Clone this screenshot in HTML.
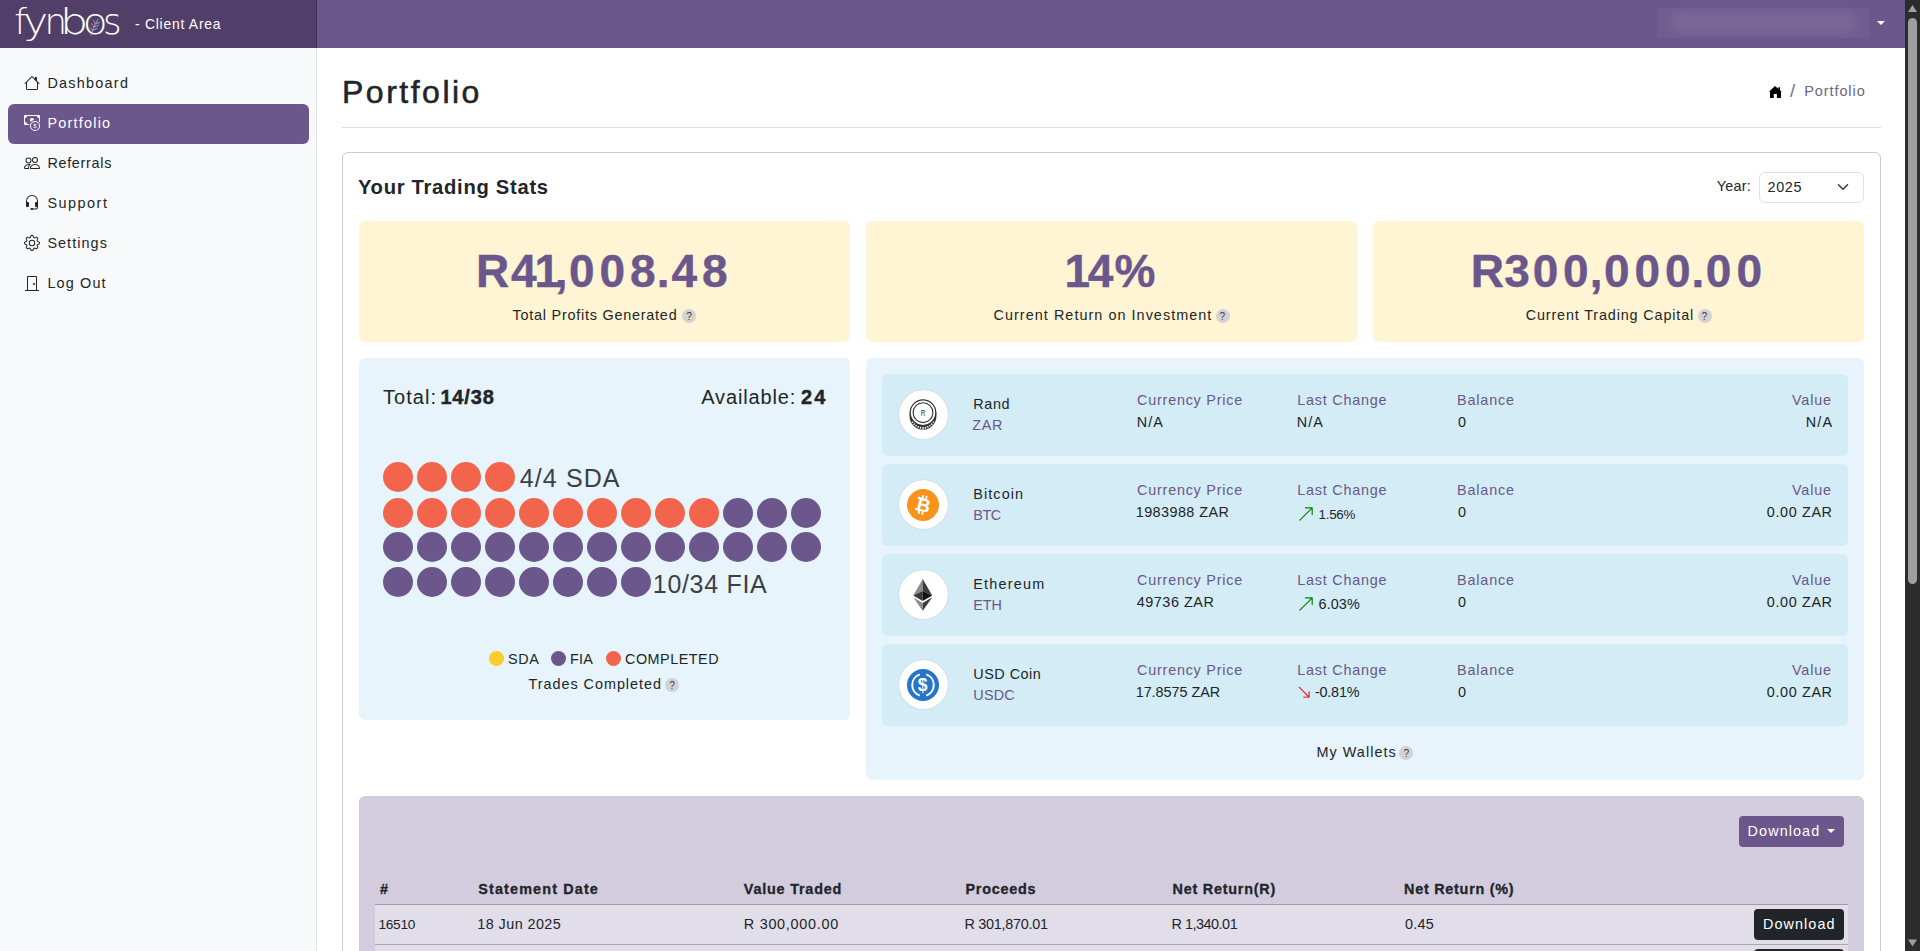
<!DOCTYPE html>
<html lang="en"><head><meta charset="utf-8"><title>Portfolio - Client Area</title>
<style>
html,body{margin:0;padding:0}
body{width:1920px;height:951px;overflow:hidden;position:relative;background:#fff;font-family:"Liberation Sans", sans-serif;color:#212529}
.a{position:absolute;box-sizing:border-box}
.t{position:absolute;white-space:nowrap;line-height:1;margin:0;padding:0}
b{font-weight:700}
.c{display:inline-flex;justify-content:center}
</style></head><body>
<header>
<div class="a" style="left:0px;top:0px;width:317px;height:48px;background:#523f69;"></div>
<div class="a" style="left:317px;top:0px;width:1588px;height:48px;background:#6b578b;"></div>
<div class="a" style="left:316px;top:0px;width:1px;height:48px;background:#47325d;"></div>
<svg class="a" style="left:0;top:0" width="130" height="48" viewBox="0 0 130 48"><text y="34.2" font-family="'DejaVu Sans Light','DejaVu Sans',sans-serif" font-weight="200" font-size="36" fill="#fff"><tspan x="14.3" textLength="12.7" lengthAdjust="spacingAndGlyphs">f</tspan><tspan x="23.3" textLength="24.9" lengthAdjust="spacingAndGlyphs">y</tspan><tspan x="44.4" textLength="22.6" lengthAdjust="spacingAndGlyphs">n</tspan><tspan x="59.9" textLength="28.3" lengthAdjust="spacingAndGlyphs">b</tspan><tspan x="82.7" textLength="24.9" lengthAdjust="spacingAndGlyphs">o</tspan><tspan x="102.9" textLength="18.6" lengthAdjust="spacingAndGlyphs">s</tspan></text><g stroke="#c9bfe0" stroke-width="0.7" fill="none" stroke-linecap="round"><path d="M91 35.500C92.500 30 94.500 25 98 19.500"/><path d="M92.500 30.500l-2.500-3M93.800 27l-2.200-3.400M95.300 24l-1.600-3.400M93.500 30l3.400-1.600M94.900 26.600l3.600-1.400M96.500 23.400l3.200-.8"/></g></svg>
<div class="t" style="left:135.00px;top:18px;font-size:13.9px;color:#fff;letter-spacing:0.753px;">- Client Area</div>
<div class="a" style="left:1657px;top:7.5px;width:212px;height:30.5px;background:rgba(255,255,255,0.035);"></div>
<div class="a" style="left:1669px;top:12px;width:188px;height:21px;background:rgba(255,255,255,0.08);border-radius:10px;filter:blur(5px);"></div>
<svg class="a" style="left:1877px;top:21px" width="8" height="4" viewBox="0 0 8 4"><path d="M0 0h8L4 4z" fill="#fff"/></svg>
</header>
<nav>
<div class="a" style="left:0px;top:48px;width:317px;height:903px;background:#f8f9fa;border-right:1px solid #dee2e6;"></div>
<div class="a" style="left:8px;top:104px;width:301px;height:40px;background:#6b578b;border-radius:6px;"></div>
<svg class="a" style="left:24px;top:75px;" width="16" height="16" viewBox="0 0 16 16" fill="#212529"><path d="M8.707 1.5a1 1 0 0 0-1.414 0L.646 8.146a.5.5 0 0 0 .708.708L2 8.207V13.5A1.5 1.5 0 0 0 3.5 15h9a1.5 1.5 0 0 0 1.5-1.5V8.207l.646.647a.5.5 0 0 0 .708-.708L13 5.793V2.5a.5.5 0 0 0-.5-.5h-1a.5.5 0 0 0-.5.5v1.293zM13 7.207V13.5a.5.5 0 0 1-.5.5h-9a.5.5 0 0 1-.5-.5V7.207l5-5z"/></svg>
<div class="t" style="left:47.40px;top:76px;font-size:14.4px;color:#212529;letter-spacing:1.268px;">Dashboard</div>
<svg class="a" style="left:24px;top:115px;" width="16" height="16" viewBox="0 0 16 16" fill="#fff"><path fill-rule="evenodd" d="M11 15a4 4 0 1 0 0-8 4 4 0 0 0 0 8m5-4a5 5 0 1 1-10 0 5 5 0 0 1 10 0"/><path d="M9.438 11.944c.047.596.518 1.06 1.363 1.116v.44h.375v-.443c.875-.061 1.386-.529 1.386-1.207 0-.618-.39-.936-1.09-1.1l-.296-.07v-1.2c.376.043.614.248.671.532h.658c-.047-.575-.54-1.024-1.329-1.073V8.5h-.375v.45c-.747.073-1.255.522-1.255 1.158 0 .562.378.92 1.007 1.066l.248.061v1.272c-.384-.058-.639-.27-.696-.563h-.668zm1.36-1.354c-.369-.085-.569-.26-.569-.522 0-.294.216-.514.572-.578v1.1zm.432.746c.449.104.655.272.655.569 0 .339-.257.571-.709.614v-1.195z"/><path d="M1 0a1 1 0 0 0-1 1v8a1 1 0 0 0 1 1h4.083q.088-.517.258-1H3a2 2 0 0 0-2-2V3a2 2 0 0 0 2-2h10a2 2 0 0 0 2 2v3.528c.38.34.717.728 1 1.154V1a1 1 0 0 0-1-1z"/><path d="M9.998 5.083 10 5a2 2 0 1 0-3.132 1.65 6 6 0 0 1 3.13-1.567"/></svg>
<div class="t" style="left:47.40px;top:116px;font-size:14.4px;color:#fff;letter-spacing:1.238px;">Portfolio</div>
<svg class="a" style="left:24px;top:155px;" width="16" height="16" viewBox="0 0 16 16" fill="#212529"><path d="M15 14s1 0 1-1-1-4-5-4-5 3-5 4 1 1 1 1zm-7.978-1L7 12.996c.001-.264.167-1.03.76-1.72C8.312 10.629 9.282 10 11 10c1.717 0 2.687.63 3.24 1.276.593.69.758 1.457.76 1.72l-.008.002-.014.002zM11 7a2 2 0 1 0 0-4 2 2 0 0 0 0 4m3-2a3 3 0 1 1-6 0 3 3 0 0 1 6 0M6.936 9.28a6 6 0 0 0-1.23-.247A7 7 0 0 0 5 9c-4 0-5 3-5 4q0 1 1 1h4.216A2.24 2.24 0 0 1 5 13c0-1.01.377-2.042 1.09-2.904.243-.294.526-.569.846-.816M4.92 10A5.5 5.5 0 0 0 4 13H1c0-.26.164-1.03.76-1.724.545-.636 1.492-1.256 3.16-1.275ZM1.5 5.5a3 3 0 1 1 6 0 3 3 0 0 1-6 0m3-2a2 2 0 1 0 0 4 2 2 0 0 0 0-4"/></svg>
<div class="t" style="left:47.40px;top:156px;font-size:14.4px;color:#212529;letter-spacing:0.695px;">Referrals</div>
<svg class="a" style="left:24px;top:195px;" width="16" height="16" viewBox="0 0 16 16" fill="#212529"><path d="M8 1a5 5 0 0 0-5 5v1h1a1 1 0 0 1 1 1v3a1 1 0 0 1-1 1H3a1 1 0 0 1-1-1V6a6 6 0 1 1 12 0v6a2.5 2.5 0 0 1-2.5 2.5H9.366a1 1 0 0 1-.866.5h-1a1 1 0 1 1 0-2h1a1 1 0 0 1 .866.5H11.5A1.5 1.5 0 0 0 13 12h-1a1 1 0 0 1-1-1V8a1 1 0 0 1 1-1h1V6a5 5 0 0 0-5-5"/></svg>
<div class="t" style="left:47.40px;top:196px;font-size:14.4px;color:#212529;letter-spacing:1.521px;">Support</div>
<svg class="a" style="left:24px;top:235px;" width="16" height="16" viewBox="0 0 16 16" fill="#212529"><path d="M8 4.754a3.246 3.246 0 1 0 0 6.492 3.246 3.246 0 0 0 0-6.492M5.754 8a2.246 2.246 0 1 1 4.492 0 2.246 2.246 0 0 1-4.492 0"/><path d="M9.796 1.343c-.527-1.79-3.065-1.79-3.592 0l-.094.319a.873.873 0 0 1-1.255.52l-.292-.16c-1.64-.892-3.433.902-2.54 2.541l.159.292a.873.873 0 0 1-.52 1.255l-.319.094c-1.79.527-1.79 3.065 0 3.592l.319.094a.873.873 0 0 1 .52 1.255l-.16.292c-.892 1.64.901 3.434 2.541 2.54l.292-.159a.873.873 0 0 1 1.255.52l.094.319c.527 1.79 3.065 1.79 3.592 0l.094-.319a.873.873 0 0 1 1.255-.52l.292.16c1.64.893 3.434-.902 2.54-2.541l-.159-.292a.873.873 0 0 1 .52-1.255l.319-.094c1.79-.527 1.79-3.065 0-3.592l-.319-.094a.873.873 0 0 1-.52-1.255l.16-.292c.893-1.64-.902-3.433-2.541-2.54l-.292.159a.873.873 0 0 1-1.255-.52zm-2.633.283c.246-.835 1.428-.835 1.674 0l.094.319a1.873 1.873 0 0 0 2.693 1.115l.291-.16c.764-.415 1.6.42 1.184 1.185l-.159.292a1.873 1.873 0 0 0 1.116 2.692l.318.094c.835.246.835 1.428 0 1.674l-.319.094a1.873 1.873 0 0 0-1.115 2.693l.16.291c.415.764-.42 1.6-1.185 1.184l-.291-.159a1.873 1.873 0 0 0-2.693 1.116l-.094.318c-.246.835-1.428.835-1.674 0l-.094-.319a1.873 1.873 0 0 0-2.692-1.115l-.292.16c-.764.415-1.6-.42-1.184-1.185l.159-.291A1.873 1.873 0 0 0 1.945 8.93l-.319-.094c-.835-.246-.835-1.428 0-1.674l.319-.094A1.873 1.873 0 0 0 3.06 4.377l-.16-.292c-.415-.764.42-1.6 1.185-1.184l.292.159a1.873 1.873 0 0 0 2.692-1.115z"/></svg>
<div class="t" style="left:47.40px;top:236px;font-size:14.4px;color:#212529;letter-spacing:1.062px;">Settings</div>
<svg class="a" style="left:24px;top:275px;" width="16" height="16" viewBox="0 0 16 16" fill="#212529"><path d="M3 2a1 1 0 0 1 1-1h8a1 1 0 0 1 1 1v13h1.5a.5.5 0 0 1 0 1h-13a.5.5 0 0 1 0-1H3zm1 13h8V2H4z"/><path d="M9 9a1 1 0 1 0 2 0 1 1 0 0 0-2 0"/></svg>
<div class="t" style="left:47.40px;top:276px;font-size:14.4px;color:#212529;letter-spacing:1.161px;">Log Out</div>
</nav>
<main>
<div class="t" style="left:342.00px;top:76px;font-size:32px;color:#212529;-webkit-text-stroke:0.55px #212529;letter-spacing:2.502px;">Portfolio</div>
<svg class="a" style="left:1768px;top:85px" width="15" height="14" viewBox="0 0 15 14"><path d="M7 1L.9 6.700h1.100v6.200h3.750V9.100h3.150v3.800h4.100V6.700h.600L12 5.100V2.250h-1.600v1.450z" fill="#000"/></svg>
<div class="t" style="left:1790.00px;top:82px;font-size:18.5px;color:#6c757d;">/</div>
<div class="t" style="left:1804.15px;top:84px;font-size:14.4px;color:#6c6480;letter-spacing:0.969px;">Portfolio</div>
<div class="a" style="left:342px;top:127px;width:1539px;height:1px;background:#dddbe6;"></div>
<section>
<div class="a" style="left:342px;top:152px;width:1539px;height:830px;background:#fff;border-radius:6px;border:1px solid #cbcbce;"></div>
<div class="t" style="left:357.90px;top:177px;font-size:20.2px;color:#212529;font-weight:700;letter-spacing:0.719px;">Your Trading Stats</div>
<div class="t" style="left:1716.74px;top:179px;font-size:14.4px;color:#212529;letter-spacing:0.246px;">Year:</div>
<div class="a" style="left:1759px;top:172px;width:104.5px;height:31px;background:#fff;border-radius:6px;border:1px solid #dee2e6;"></div>
<div class="t" style="left:1767.50px;top:180px;font-size:14.4px;color:#212529;letter-spacing:0.661px;">2025</div>
<svg class="a" style="left:1836.8px;top:180.7px" width="12" height="12" viewBox="0 0 16 16"><path fill="none" stroke="#343a40" stroke-linecap="round" stroke-linejoin="round" stroke-width="2" d="m2 5 6 6 6-6"/></svg>
<div class="a" style="left:359px;top:221px;width:491px;height:120.5px;background:#fff4d3;border-radius:6px;"></div>
<div class="t" style="left:476.44px;top:248px;font-size:46.0px;color:#6b578b;font-weight:700;-webkit-text-stroke:0.4px #6b578b;"><span class="c" style="width:32.36px">R</span><span class="c" style="width:29.77px">4</span><span class="c" style="width:17.34px">1</span><span class="c" style="width:10.55px">,</span><span class="c" style="width:30.62px">0</span><span class="c" style="width:30.62px">0</span><span class="c" style="width:30.12px">8</span><span class="c" style="width:10.89px">.</span><span class="c" style="width:31.36px">4</span><span class="c" style="width:29.67px">8</span></div>
<div class="t" style="left:512.50px;top:308px;font-size:14.4px;color:#212529;letter-spacing:0.771px;">Total Profits Generated</div>
<div class="a" style="left:682.1px;top:309px;width:14px;height:14px;background:#d3d3d3;border-radius:7px;"></div>
<div class="t" style="left:686.28px;top:312px;font-size:10.2px;color:#3d3d3d;">?</div>
<div class="a" style="left:866px;top:221px;width:491px;height:120.5px;background:#fff4d3;border-radius:6px;"></div>
<div class="t" style="left:1068.59px;top:248px;font-size:46.0px;color:#6b578b;font-weight:700;-webkit-text-stroke:0.4px #6b578b;"><span class="c" style="width:17.34px">1</span><span class="c" style="width:29.53px">4</span><span class="c" style="width:39.14px">%</span></div>
<div class="t" style="left:993.55px;top:308px;font-size:14.4px;color:#212529;letter-spacing:1.045px;">Current Return on Investment</div>
<div class="a" style="left:1215.9px;top:309px;width:14px;height:14px;background:#d3d3d3;border-radius:7px;"></div>
<div class="t" style="left:1219.58px;top:312px;font-size:10.2px;color:#3d3d3d;">?</div>
<div class="a" style="left:1373px;top:221px;width:491px;height:120.5px;background:#fff4d3;border-radius:6px;"></div>
<div class="t" style="left:1470.77px;top:248px;font-size:46.0px;color:#6b578b;font-weight:700;-webkit-text-stroke:0.4px #6b578b;"><span class="c" style="width:33.03px">R</span><span class="c" style="width:26.48px">3</span><span class="c" style="width:30.62px">0</span><span class="c" style="width:30.06px">0</span><span class="c" style="width:10.55px">,</span><span class="c" style="width:30.62px">0</span><span class="c" style="width:30.62px">0</span><span class="c" style="width:30.06px">0</span><span class="c" style="width:10.55px">.</span><span class="c" style="width:30.62px">0</span><span class="c" style="width:30.62px">0</span></div>
<div class="t" style="left:1525.65px;top:308px;font-size:14.4px;color:#212529;letter-spacing:0.857px;">Current Trading Capital</div>
<div class="a" style="left:1697.8px;top:309px;width:14px;height:14px;background:#d3d3d3;border-radius:7px;"></div>
<div class="t" style="left:1701.48px;top:312px;font-size:10.2px;color:#3d3d3d;">?</div>
<section>
<div class="a" style="left:359px;top:358px;width:491px;height:361.6px;background:#e7f4fb;border-radius:6px;"></div>
<div class="t" style="left:383.00px;top:387px;font-size:20px;color:#212529;letter-spacing:1.050px;">Total:</div>
<div class="t" style="left:440.42px;top:387px;font-size:20px;color:#212529;font-weight:700;-webkit-text-stroke:0.45px #212529;letter-spacing:0.830px;">14/38</div>
<div class="t" style="left:701.30px;top:387px;font-size:20px;color:#212529;letter-spacing:0.837px;">Available:</div>
<div class="t" style="left:801.02px;top:387px;font-size:20px;color:#212529;font-weight:700;-webkit-text-stroke:0.45px #212529;letter-spacing:2.125px;">24</div>
<div class="a" style="left:383px;top:461.75px;width:30px;height:30px;background:#f2644b;border-radius:15.0px;"></div>
<div class="a" style="left:417px;top:461.75px;width:30px;height:30px;background:#f2644b;border-radius:15.0px;"></div>
<div class="a" style="left:451px;top:461.75px;width:30px;height:30px;background:#f2644b;border-radius:15.0px;"></div>
<div class="a" style="left:485px;top:461.75px;width:30px;height:30px;background:#f2644b;border-radius:15.0px;"></div>
<div class="t" style="left:519.80px;top:466px;font-size:25px;color:#3c4045;letter-spacing:1.096px;">4/4 SDA</div>
<div class="a" style="left:383px;top:497.5px;width:30px;height:30px;background:#f2644b;border-radius:15.0px;"></div>
<div class="a" style="left:417px;top:497.5px;width:30px;height:30px;background:#f2644b;border-radius:15.0px;"></div>
<div class="a" style="left:451px;top:497.5px;width:30px;height:30px;background:#f2644b;border-radius:15.0px;"></div>
<div class="a" style="left:485px;top:497.5px;width:30px;height:30px;background:#f2644b;border-radius:15.0px;"></div>
<div class="a" style="left:519px;top:497.5px;width:30px;height:30px;background:#f2644b;border-radius:15.0px;"></div>
<div class="a" style="left:553px;top:497.5px;width:30px;height:30px;background:#f2644b;border-radius:15.0px;"></div>
<div class="a" style="left:587px;top:497.5px;width:30px;height:30px;background:#f2644b;border-radius:15.0px;"></div>
<div class="a" style="left:621px;top:497.5px;width:30px;height:30px;background:#f2644b;border-radius:15.0px;"></div>
<div class="a" style="left:655px;top:497.5px;width:30px;height:30px;background:#f2644b;border-radius:15.0px;"></div>
<div class="a" style="left:689px;top:497.5px;width:30px;height:30px;background:#f2644b;border-radius:15.0px;"></div>
<div class="a" style="left:723px;top:497.5px;width:30px;height:30px;background:#6b578b;border-radius:15.0px;"></div>
<div class="a" style="left:757px;top:497.5px;width:30px;height:30px;background:#6b578b;border-radius:15.0px;"></div>
<div class="a" style="left:791px;top:497.5px;width:30px;height:30px;background:#6b578b;border-radius:15.0px;"></div>
<div class="a" style="left:383px;top:532px;width:30px;height:30px;background:#6b578b;border-radius:15.0px;"></div>
<div class="a" style="left:417px;top:532px;width:30px;height:30px;background:#6b578b;border-radius:15.0px;"></div>
<div class="a" style="left:451px;top:532px;width:30px;height:30px;background:#6b578b;border-radius:15.0px;"></div>
<div class="a" style="left:485px;top:532px;width:30px;height:30px;background:#6b578b;border-radius:15.0px;"></div>
<div class="a" style="left:519px;top:532px;width:30px;height:30px;background:#6b578b;border-radius:15.0px;"></div>
<div class="a" style="left:553px;top:532px;width:30px;height:30px;background:#6b578b;border-radius:15.0px;"></div>
<div class="a" style="left:587px;top:532px;width:30px;height:30px;background:#6b578b;border-radius:15.0px;"></div>
<div class="a" style="left:621px;top:532px;width:30px;height:30px;background:#6b578b;border-radius:15.0px;"></div>
<div class="a" style="left:655px;top:532px;width:30px;height:30px;background:#6b578b;border-radius:15.0px;"></div>
<div class="a" style="left:689px;top:532px;width:30px;height:30px;background:#6b578b;border-radius:15.0px;"></div>
<div class="a" style="left:723px;top:532px;width:30px;height:30px;background:#6b578b;border-radius:15.0px;"></div>
<div class="a" style="left:757px;top:532px;width:30px;height:30px;background:#6b578b;border-radius:15.0px;"></div>
<div class="a" style="left:791px;top:532px;width:30px;height:30px;background:#6b578b;border-radius:15.0px;"></div>
<div class="a" style="left:383px;top:566.6px;width:30px;height:30px;background:#6b578b;border-radius:15.0px;"></div>
<div class="a" style="left:417px;top:566.6px;width:30px;height:30px;background:#6b578b;border-radius:15.0px;"></div>
<div class="a" style="left:451px;top:566.6px;width:30px;height:30px;background:#6b578b;border-radius:15.0px;"></div>
<div class="a" style="left:485px;top:566.6px;width:30px;height:30px;background:#6b578b;border-radius:15.0px;"></div>
<div class="a" style="left:519px;top:566.6px;width:30px;height:30px;background:#6b578b;border-radius:15.0px;"></div>
<div class="a" style="left:553px;top:566.6px;width:30px;height:30px;background:#6b578b;border-radius:15.0px;"></div>
<div class="a" style="left:587px;top:566.6px;width:30px;height:30px;background:#6b578b;border-radius:15.0px;"></div>
<div class="a" style="left:621px;top:566.6px;width:30px;height:30px;background:#6b578b;border-radius:15.0px;"></div>
<div class="t" style="left:652.80px;top:572px;font-size:25px;color:#3c4045;letter-spacing:0.691px;">10/34 FIA</div>
<div class="a" style="left:488.7px;top:651px;width:15.2px;height:15.2px;background:#fbcd2b;border-radius:7.6px;"></div>
<div class="t" style="left:508.00px;top:652px;font-size:14.4px;color:#212529;letter-spacing:0.664px;">SDA</div>
<div class="a" style="left:550.7px;top:651px;width:15.2px;height:15.2px;background:#6b578b;border-radius:7.6px;"></div>
<div class="t" style="left:570.00px;top:652px;font-size:14.4px;color:#212529;letter-spacing:0.195px;">FIA</div>
<div class="a" style="left:606.3px;top:651px;width:15.2px;height:15.2px;background:#f2644b;border-radius:7.6px;"></div>
<div class="t" style="left:625.00px;top:652px;font-size:14.4px;color:#212529;letter-spacing:0.504px;">COMPLETED</div>
<div class="t" style="left:528.50px;top:677px;font-size:14.4px;color:#212529;letter-spacing:0.976px;">Trades Completed</div>
<div class="a" style="left:665px;top:678px;width:14px;height:14px;background:#d3d3d3;border-radius:7px;"></div>
<div class="t" style="left:669.18px;top:681px;font-size:10.2px;color:#3d3d3d;">?</div>
</section>
<section>
<div class="a" style="left:866px;top:358px;width:998px;height:421.8px;background:#e7f4fb;border-radius:6px;"></div>
<div class="a" style="left:882px;top:374px;width:966px;height:82px;background:#d3ecf6;border-radius:6px;"></div>
<div class="a" style="left:898.8px;top:390.2px;width:49px;height:49px;background:#fff;border-radius:24.5px;box-shadow:0 0 1px rgba(120,60,90,.4);"></div>
<svg class="a" style="left:907px;top:398.4px" width="32" height="33" viewBox="0 0 32 33"><path d="M2.600 14.700v3.500a13.400 13.400 0 0 0 26.800 0v-3.500z" fill="#333"/><path d="M25.44 23.65L27.00 24.55M24.10 25.49L25.44 26.70M22.41 27.02L23.46 28.47M20.43 28.16L21.17 29.80M18.27 28.86L18.64 30.62M16.00 29.10L16.00 30.90M13.73 28.86L13.36 30.62M11.57 28.16L10.83 29.80M9.59 27.02L8.54 28.47M7.90 25.49L6.56 26.70M6.56 23.65L5.00 24.55" stroke="#fff" stroke-width="1.300" fill="none"/><circle cx="16" cy="14.700" r="12.800" fill="#fff" stroke="#333" stroke-width="1.200"/><circle cx="16" cy="14.700" r="9.900" fill="none" stroke="#333" stroke-width="1.100"/><text x="13.750" y="18.200" font-family="'Liberation Sans',sans-serif" font-size="9.800" fill="#2b2b2b" textLength="4.700" lengthAdjust="spacingAndGlyphs">R</text></svg>
<div class="t" style="left:973.30px;top:397px;font-size:14.4px;color:#212529;letter-spacing:0.635px;">Rand</div>
<div class="t" style="left:972.30px;top:418px;font-size:14.4px;color:#6b578b;letter-spacing:0.648px;">ZAR</div>
<div class="t" style="left:1137.10px;top:393px;font-size:14.4px;color:#6b578b;letter-spacing:0.764px;">Currency Price</div>
<div class="t" style="left:1136.70px;top:415px;font-size:14.4px;color:#212529;letter-spacing:1.133px;">N/A</div>
<div class="t" style="left:1297.20px;top:393px;font-size:14.4px;color:#6b578b;letter-spacing:0.770px;">Last Change</div>
<div class="t" style="left:1296.70px;top:415px;font-size:14.4px;color:#212529;letter-spacing:1.133px;">N/A</div>
<div class="t" style="left:1457.00px;top:393px;font-size:14.4px;color:#6b578b;letter-spacing:0.849px;">Balance</div>
<div class="t" style="left:1458.00px;top:415px;font-size:14.4px;color:#212529;">0</div>
<div class="t" style="left:1792.02px;top:393px;font-size:14.4px;color:#6b578b;letter-spacing:0.809px;">Value</div>
<div class="t" style="left:1805.73px;top:415px;font-size:14.4px;color:#212529;letter-spacing:1.133px;">N/A</div>
<div class="a" style="left:882px;top:464px;width:966px;height:82px;background:#d3ecf6;border-radius:6px;"></div>
<div class="a" style="left:898.8px;top:480.2px;width:49px;height:49px;background:#fff;border-radius:24.5px;box-shadow:0 0 1px rgba(120,60,90,.4);"></div>
<svg class="a" style="left:907px;top:489px" width="32" height="32" viewBox="0 0 32 32"><circle cx="16" cy="16" r="16" fill="#f7931a"/><g transform="rotate(14 16 16)" fill="#fff"><text x="16.700" y="22.600" text-anchor="middle" font-family="'Liberation Sans',sans-serif" font-weight="700" font-size="19" textLength="13.300" lengthAdjust="spacingAndGlyphs">B</text><rect x="12.900" y="6.400" width="1.900" height="3.600"/><rect x="16.500" y="6.400" width="1.900" height="3.600"/><rect x="12.900" y="22" width="1.900" height="3.600"/><rect x="16.500" y="22" width="1.900" height="3.600"/><rect x="9.200" y="9" width="3" height="2.300"/><rect x="9.200" y="20.400" width="3" height="2.300"/></g></svg>
<div class="t" style="left:973.30px;top:487px;font-size:14.4px;color:#212529;letter-spacing:1.094px;">Bitcoin</div>
<div class="t" style="left:973.30px;top:508px;font-size:14.4px;color:#6b578b;letter-spacing:-0.430px;">BTC</div>
<div class="t" style="left:1137.10px;top:483px;font-size:14.4px;color:#6b578b;letter-spacing:0.764px;">Currency Price</div>
<div class="t" style="left:1135.70px;top:505px;font-size:14.4px;color:#212529;letter-spacing:0.444px;">1983988 ZAR</div>
<div class="t" style="left:1297.20px;top:483px;font-size:14.4px;color:#6b578b;letter-spacing:0.770px;">Last Change</div>
<svg class="a" style="left:1296.5px;top:505.3px;" width="18" height="18" viewBox="0 0 16 16" fill="#008000"><path fill-rule="evenodd" d="M14 2.5a.5.5 0 0 0-.5-.5h-6a.5.5 0 0 0 0 1h4.793L2.146 13.146a.5.5 0 0 0 .708.708L13 3.707V8.5a.5.5 0 0 0 1 0z"/></svg>
<div class="t" style="left:1318.60px;top:508px;font-size:13.4px;color:#212529;letter-spacing:-0.293px;">1.56%</div>
<div class="t" style="left:1457.00px;top:483px;font-size:14.4px;color:#6b578b;letter-spacing:0.849px;">Balance</div>
<div class="t" style="left:1458.00px;top:505px;font-size:14.4px;color:#212529;">0</div>
<div class="t" style="left:1792.02px;top:483px;font-size:14.4px;color:#6b578b;letter-spacing:0.809px;">Value</div>
<div class="t" style="left:1766.83px;top:505px;font-size:14.4px;color:#212529;letter-spacing:0.625px;">0.00 ZAR</div>
<div class="a" style="left:882px;top:554px;width:966px;height:82px;background:#d3ecf6;border-radius:6px;"></div>
<div class="a" style="left:898.8px;top:570.2px;width:49px;height:49px;background:#fff;border-radius:24.5px;box-shadow:0 0 1px rgba(120,60,90,.4);"></div>
<svg class="a" style="left:907px;top:579px" width="32" height="32" viewBox="0 0 32 32"><path d="M15.700 0L6.200 16.400l9.500-4.300z" fill="#8c8c8c"/><path d="M15.700 0l9.500 16.400-9.500-4.300z" fill="#3c3c3b"/><path d="M15.700 12.100l-9.500 4.300 9.500 5.600z" fill="#393939"/><path d="M15.700 12.100l9.500 4.300-9.500 5.600z" fill="#141414"/><path d="M6.200 18.300l9.500 5.600V32z" fill="#8c8c8c"/><path d="M25.200 18.300l-9.500 5.600V32z" fill="#3c3c3b"/></svg>
<div class="t" style="left:973.30px;top:577px;font-size:14.4px;color:#212529;letter-spacing:1.217px;">Ethereum</div>
<div class="t" style="left:973.30px;top:598px;font-size:14.4px;color:#6b578b;letter-spacing:-0.102px;">ETH</div>
<div class="t" style="left:1137.10px;top:573px;font-size:14.4px;color:#6b578b;letter-spacing:0.764px;">Currency Price</div>
<div class="t" style="left:1136.70px;top:595px;font-size:14.4px;color:#212529;letter-spacing:0.545px;">49736 ZAR</div>
<div class="t" style="left:1297.20px;top:573px;font-size:14.4px;color:#6b578b;letter-spacing:0.770px;">Last Change</div>
<svg class="a" style="left:1296.5px;top:595.3px;" width="18" height="18" viewBox="0 0 16 16" fill="#008000"><path fill-rule="evenodd" d="M14 2.5a.5.5 0 0 0-.5-.5h-6a.5.5 0 0 0 0 1h4.793L2.146 13.146a.5.5 0 0 0 .708.708L13 3.707V8.5a.5.5 0 0 0 1 0z"/></svg>
<div class="t" style="left:1318.60px;top:597px;font-size:14.4px;color:#212529;letter-spacing:0.070px;">6.03%</div>
<div class="t" style="left:1457.00px;top:573px;font-size:14.4px;color:#6b578b;letter-spacing:0.849px;">Balance</div>
<div class="t" style="left:1458.00px;top:595px;font-size:14.4px;color:#212529;">0</div>
<div class="t" style="left:1792.02px;top:573px;font-size:14.4px;color:#6b578b;letter-spacing:0.809px;">Value</div>
<div class="t" style="left:1766.83px;top:595px;font-size:14.4px;color:#212529;letter-spacing:0.625px;">0.00 ZAR</div>
<div class="a" style="left:882px;top:644px;width:966px;height:82px;background:#d3ecf6;border-radius:6px;"></div>
<div class="a" style="left:898.8px;top:660.2px;width:49px;height:49px;background:#fff;border-radius:24.5px;box-shadow:0 0 1px rgba(120,60,90,.4);"></div>
<svg class="a" style="left:907px;top:669px" width="32" height="32" viewBox="0 0 32 32"><circle cx="16" cy="16" r="16" fill="#2775ca"/><g fill="none" stroke="#fff" stroke-width="2"><path d="M12.800 5.400a11.200 11.200 0 0 0 0 21.200"/><path d="M19.200 5.400a11.200 11.200 0 0 1 0 21.200"/></g><text x="15.600" y="22" text-anchor="middle" font-family="'Liberation Sans',sans-serif" font-weight="700" font-size="17.500" fill="#fff">$</text></svg>
<div class="t" style="left:973.30px;top:667px;font-size:14.4px;color:#212529;letter-spacing:0.489px;">USD Coin</div>
<div class="t" style="left:973.30px;top:688px;font-size:14.4px;color:#6b578b;letter-spacing:0.188px;">USDC</div>
<div class="t" style="left:1137.10px;top:663px;font-size:14.4px;color:#6b578b;letter-spacing:0.764px;">Currency Price</div>
<div class="t" style="left:1135.70px;top:685px;font-size:14.4px;color:#212529;letter-spacing:-0.036px;">17.8575 ZAR</div>
<div class="t" style="left:1297.20px;top:663px;font-size:14.4px;color:#6b578b;letter-spacing:0.770px;">Last Change</div>
<svg class="a" style="left:1297px;top:685.3px;stroke:#ff0000;stroke-width:.2px;" width="14.4" height="14.4" viewBox="0 0 16 16" fill="#ff0000"><path fill-rule="evenodd" d="M14 13.5a.5.5 0 0 1-.5.5h-6a.5.5 0 0 1 0-1h4.793L2.146 2.854a.5.5 0 1 1 .708-.708L13 12.293V7.5a.5.5 0 0 1 1 0z"/></svg>
<div class="t" style="left:1315.00px;top:685px;font-size:14.4px;color:#212529;letter-spacing:-0.225px;">-0.81%</div>
<div class="t" style="left:1457.00px;top:663px;font-size:14.4px;color:#6b578b;letter-spacing:0.849px;">Balance</div>
<div class="t" style="left:1458.00px;top:685px;font-size:14.4px;color:#212529;">0</div>
<div class="t" style="left:1792.02px;top:663px;font-size:14.4px;color:#6b578b;letter-spacing:0.809px;">Value</div>
<div class="t" style="left:1766.83px;top:685px;font-size:14.4px;color:#212529;letter-spacing:0.625px;">0.00 ZAR</div>
<div class="t" style="left:1316.40px;top:745px;font-size:14.4px;color:#212529;letter-spacing:1.054px;">My Wallets</div>
<div class="a" style="left:1399.3px;top:746px;width:14px;height:14px;background:#d3d3d3;border-radius:7px;"></div>
<div class="t" style="left:1403.48px;top:749px;font-size:10.2px;color:#3d3d3d;">?</div>
</section>
<section>
<div class="a" style="left:359px;top:796px;width:1505px;height:200px;background:#d2ccde;border-radius:6px;"></div>
<div class="a" style="left:1739px;top:816px;width:105.3px;height:31px;background:#6b578b;border-radius:4px;"></div>
<div class="t" style="left:1747.60px;top:824px;font-size:14.4px;color:#fff;letter-spacing:1.082px;">Download</div>
<svg class="a" style="left:1827.3px;top:829.3px" width="8" height="4" viewBox="0 0 8 4"><path d="M0 0h8L4 4z" fill="#fff"/></svg>
<div class="t" style="left:380.00px;top:882px;font-size:14.4px;color:#212529;font-weight:700;-webkit-text-stroke:0.3px #212529;">#</div>
<div class="t" style="left:478.30px;top:882px;font-size:14.4px;color:#212529;font-weight:700;-webkit-text-stroke:0.3px #212529;letter-spacing:1.137px;">Statement Date</div>
<div class="t" style="left:743.80px;top:882px;font-size:14.4px;color:#212529;font-weight:700;-webkit-text-stroke:0.3px #212529;letter-spacing:0.793px;">Value Traded</div>
<div class="t" style="left:965.50px;top:882px;font-size:14.4px;color:#212529;font-weight:700;-webkit-text-stroke:0.3px #212529;letter-spacing:0.752px;">Proceeds</div>
<div class="t" style="left:1172.50px;top:882px;font-size:14.4px;color:#212529;font-weight:700;-webkit-text-stroke:0.3px #212529;letter-spacing:0.772px;">Net Return(R)</div>
<div class="t" style="left:1404.00px;top:882px;font-size:14.4px;color:#212529;font-weight:700;-webkit-text-stroke:0.3px #212529;letter-spacing:0.746px;">Net Return (%)</div>
<div class="a" style="left:375px;top:904px;width:1473px;height:1px;background:#a09dab;"></div>
<div class="a" style="left:375px;top:905px;width:1473px;height:39.3px;background:#e1dde9;"></div>
<div class="t" style="left:378.50px;top:918px;font-size:13.7px;color:#212529;letter-spacing:-0.309px;">16510</div>
<div class="t" style="left:477.30px;top:917px;font-size:14.4px;color:#212529;letter-spacing:0.428px;">18 Jun 2025</div>
<div class="t" style="left:743.80px;top:917px;font-size:14.4px;color:#212529;letter-spacing:0.730px;">R 300,000.00</div>
<div class="t" style="left:964.50px;top:917px;font-size:14.4px;color:#212529;letter-spacing:-0.260px;">R 301,870.01</div>
<div class="t" style="left:1171.50px;top:917px;font-size:14.4px;color:#212529;letter-spacing:-0.472px;">R 1,340.01</div>
<div class="t" style="left:1405.00px;top:917px;font-size:14.4px;color:#212529;letter-spacing:0.286px;">0.45</div>
<div class="a" style="left:1754px;top:909.2px;width:90.3px;height:30.5px;background:#212529;border-radius:4px;"></div>
<div class="t" style="left:1763.10px;top:917px;font-size:14.4px;color:#fff;letter-spacing:1.053px;">Download</div>
<div class="a" style="left:375px;top:944.3px;width:1473px;height:1px;background:#aaa6b5;"></div>
<div class="a" style="left:375px;top:945.3px;width:1473px;height:10px;background:#e1dde9;"></div>
<div class="a" style="left:1754px;top:949px;width:90.3px;height:30.5px;background:#212529;border-radius:4px;"></div>
</section>
</section>
</main>
<div class="a" style="left:1905px;top:0px;width:15px;height:951px;background:#2c2c2c;"></div>
<div class="a" style="left:1908px;top:18px;width:9px;height:566px;background:#9f9f9f;border-radius:4.5px;"></div>
<svg class="a" style="left:1905px;top:0" width="15" height="15" viewBox="0 0 15 15"><path d="M3 12h9L7.5 5z" fill="#9f9f9f"/></svg>
<svg class="a" style="left:1905px;top:936px" width="15" height="15" viewBox="0 0 15 15"><path d="M3 3.5h9L7.5 10.5z" fill="#9f9f9f"/></svg>
</body></html>
